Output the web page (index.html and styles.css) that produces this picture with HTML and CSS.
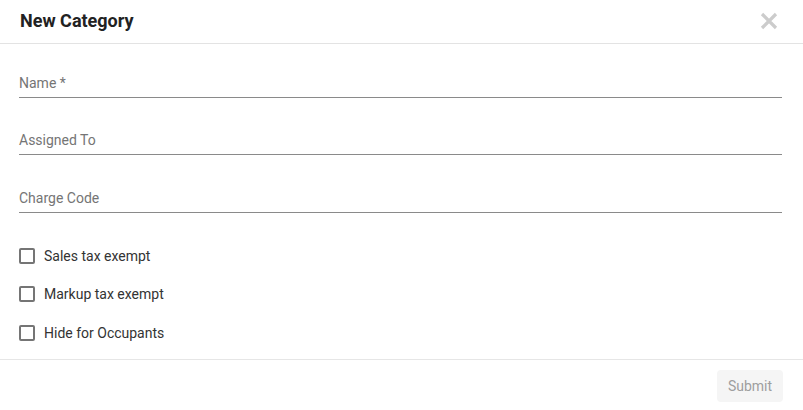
FILE: index.html
```html
<!DOCTYPE html>
<html>
<head>
<meta charset="utf-8">
<link rel="stylesheet" href="styles.css">
</head>
<body>
<div class="dialog">
  <header class="dialog-header">
    <h1 class="dialog-title">New Category</h1>
    <button class="close-btn" aria-label="Close">
      <svg width="18" height="18" viewBox="0 0 18 18"><path d="M2 2L16 16M16 2L2 16" stroke="#cccccc" stroke-width="3.2" stroke-linecap="butt"/></svg>
    </button>
  </header>
  <div class="dialog-body">
    <div class="field first"><label class="field-label">Name *</label></div>
    <div class="field"><label class="field-label">Assigned To</label></div>
    <div class="field"><label class="field-label">Charge Code</label></div>
    <div class="checks">
      <label class="check"><span class="box"></span><span class="check-label">Sales tax exempt</span></label>
      <label class="check"><span class="box"></span><span class="check-label">Markup tax exempt</span></label>
      <label class="check"><span class="box"></span><span class="check-label">Hide for Occupants</span></label>
    </div>
  </div>
  <footer class="dialog-footer">
    <button class="submit-btn">Submit</button>
  </footer>
</div>
</body>
</html>
```
FILE: styles.css
```css
* { box-sizing: border-box; }
html, body { margin: 0; padding: 0; background: #fff; }
body { font-family: Roboto, "Noto Sans", Arial, sans-serif; width: 803px; height: 410px; overflow: hidden; }
.dialog { width: 803px; }
.dialog-header {
  height: 44px;
  border-bottom: 1px solid #e3e3e3;
  display: flex;
  align-items: center;
  justify-content: space-between;
  padding: 0 25px 2px 20px;
}
.dialog-title { margin: 0; font-size: 18px; font-weight: 700; color: #222; line-height: 24px; }
.close-btn { border: 0; background: none; padding: 0; width: 18px; height: 18px; display: flex; }
.dialog-body { padding: 0 21px 0 19px; }
.field {
  margin-top: 32.4px;
  padding-bottom: 4px;
  border-bottom: 1px solid #8a8a8a;
}
.field.first { margin-top: 29px; }
.field-label { display: block; font-size: 14px; line-height: 20px; color: #757575; }
.checks { padding-top: 33px; padding-bottom: 16px; display: flex; flex-direction: column; gap: 18.5px; }
.check { display: flex; align-items: center; height: 20px; }
.box {
  width: 16px; height: 16px;
  border: 2px solid #757575;
  border-radius: 2px;
  margin-right: 9px;
}
.check-label { font-size: 14px; color: #333; line-height: 20px; }
.dialog-footer {
  border-top: 1px solid #e6e6e6;
  padding: 10px 20px 0 0;
  display: flex;
  justify-content: flex-end;
}
.submit-btn {
  border: 0;
  background: #f5f5f5;
  color: #9e9e9e;
  font-family: Roboto, "Noto Sans", Arial, sans-serif;
  font-size: 14px;
  width: 66px; height: 32px;
  border-radius: 4px;
  padding: 0;
}
```
